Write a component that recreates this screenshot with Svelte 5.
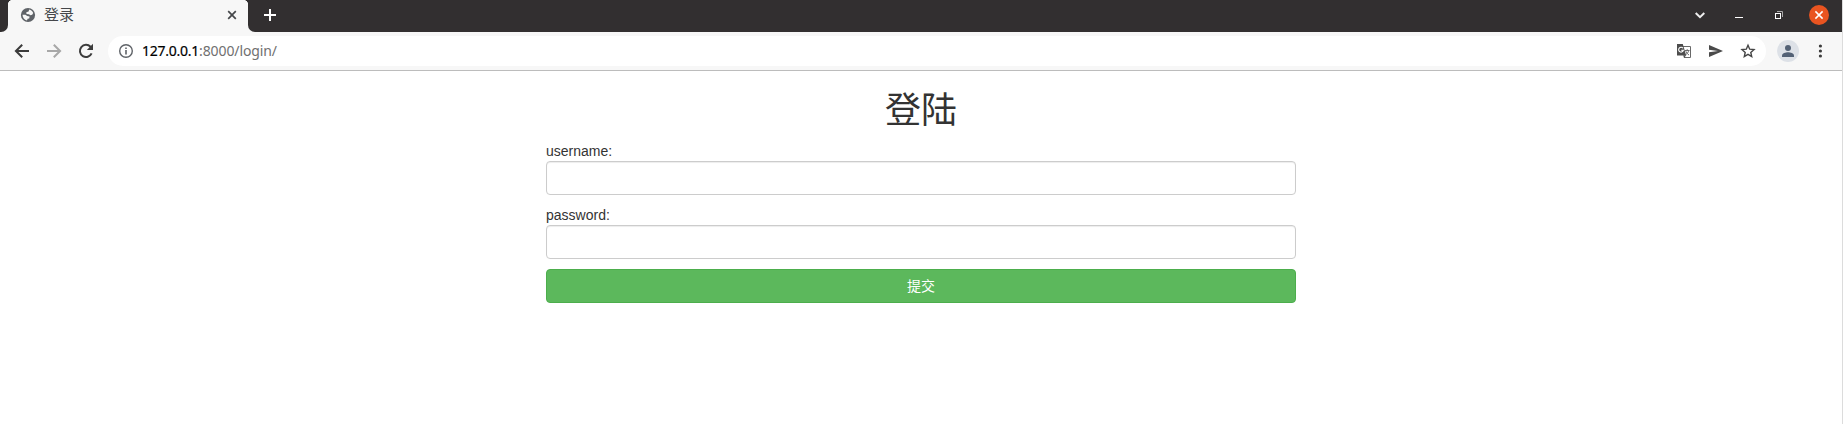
<script>
  let username = $state('');
  let password = $state('');
</script>

<div class="window">
  <header class="strip">
    <div class="edge"></div>
    <div class="tab">
      <svg class="globe" width="16" height="16" viewBox="0 0 16 16">
        <circle cx="8" cy="8" r="7.1" fill="#5f6368" />
        <path d="M9.2 2.5 C11 2.9 12.6 4.1 13.2 6 L12.2 7.8 L10.4 8.2 L9 7.2 L6.5 7 L6.3 5.2 L8.6 4.5 Z M2.5 7.8 L5.4 7.7 L7.2 8.9 L9.6 9.6 L9.2 11.4 L7.6 11.8 L7 13.6 C4.3 13 2.6 10.8 2.5 7.8 Z" fill="#f7f7f7" />
      </svg>
      <span class="title">登录</span>
      <svg class="shut" width="16" height="16" viewBox="0 0 16 16"><path d="M4.2 4.2 L11.8 11.8 M11.8 4.2 L4.2 11.8" stroke="#45474a" stroke-width="1.7" /></svg>
    </div>
    <div class="rest">
      <svg class="plus" width="16" height="16" viewBox="0 0 16 16"><path d="M8 2 V14 M2 8 H14" stroke="#fff" stroke-width="2" /></svg>
      <div class="controls">
        <svg width="20" height="20" viewBox="0 0 20 20"><path d="M6.7 8 L11 12.2 L15.3 8" fill="none" stroke="#eee" stroke-width="2" /></svg>
        <svg width="20" height="20" viewBox="0 0 20 20"><path d="M6 12.5 H14" stroke="#fff" /></svg>
        <svg width="20" height="20" viewBox="0 0 20 20"><path d="M8 6.5 H13.5 V12" fill="none" stroke="#aaa" /><rect x="6.5" y="8.5" width="5" height="5" fill="none" stroke="#fff" /></svg>
        <svg width="20" height="20" viewBox="0 0 20 20"><circle cx="10" cy="10" r="10" fill="#e95420" /><path d="M6.4 6.4 L13.6 13.6 M13.6 6.4 L6.4 13.6" stroke="#fff" stroke-width="1.5" /></svg>
      </div>
    </div>
  </header>

  <nav class="toolbar">
    <div class="nav">
      <svg width="16" height="16" viewBox="0 0 16 16"><path d="M15 8 H2.4 M8.2 1.7 L1.9 8 L8.2 14.3" fill="none" stroke="#3c3c3c" stroke-width="2" /></svg>
      <svg width="16" height="16" viewBox="0 0 16 16"><path d="M1 8 H13.6 M7.8 1.7 L14.1 8 L7.8 14.3" fill="none" stroke="#a8a8a8" stroke-width="2" /></svg>
      <svg width="16" height="16" viewBox="0 0 16 16"><path d="M13.6 10.4 A6.1 6.1 0 1 1 12.5 3.8 L13.5 5" fill="none" stroke="#3c3c3c" stroke-width="2" /><path d="M15 0.8 V7 H8.8 Z" fill="#3c3c3c" /></svg>
    </div>
    <div class="address">
      <svg width="16" height="16" viewBox="0 0 16 16"><circle cx="8" cy="8" r="6.3" fill="none" stroke="#5f6368" stroke-width="1.4" /><path d="M8 7.1 V11.4 M8 4.4 V6" stroke="#5f6368" stroke-width="1.6" /></svg>
      <div class="url"><span class="host">127.0.0.1</span><span class="path">:8000/login/</span></div>
      <div class="actions">
        <svg width="16" height="16" viewBox="0 0 16 16">
          <path d="M7 3.5 H14.5 V14.5 H8" fill="none" stroke="#696969" />
          <path d="M1 1 H6.8 L10.2 12.6 H1 Z" fill="#4d4d4d" />
          <path d="M10.2 12.3 L8 15 L7.2 12.3 Z" fill="#4d4d4d" />
          <path d="M7 5.3 A2.4 2.4 0 1 0 7.4 7.2 H5.2" fill="none" stroke="#fff" stroke-width="1.1" />
          <path d="M9 7.5 H13.5 M11.2 6.2 V7.5 M12.7 7.6 C12.2 9.4 11.4 10.3 10.2 11.4 M9.8 8.2 C10.5 9.8 11.8 11.3 13 12.1" fill="none" stroke="#696969" />
        </svg>
        <svg width="16" height="16" viewBox="0 0 16 16"><path d="M1 2 L15 8 L1 14 V9.3 L10 8 L1 6.7 Z" fill="#4a4a4a" /></svg>
        <svg width="16" height="16" viewBox="0 0 16 16"><path d="M8 2.3 L9.7 6.2 L14 6.6 L10.8 9.4 L11.7 13.6 L8 11.4 L4.3 13.6 L5.2 9.4 L2 6.6 L6.3 6.2 Z" fill="none" stroke="#454545" stroke-width="1.4" /></svg>
      </div>
    </div>
    <svg class="avatar" width="22" height="22" viewBox="0 0 22 22"><circle cx="11" cy="11" r="11" fill="#dde1e7" /><circle cx="11" cy="8" r="3" fill="#536175" /><path d="M5 17 V15.5 C5 13.3 8.7 12.3 11 12.3 S17 13.3 17 15.5 V17 Z" fill="#536175" /></svg>
    <svg class="dots" width="4" height="16" viewBox="0 0 4 16"><g fill="#3c3c3c"><circle cx="2.4" cy="3" r="1.6" /><circle cx="2.4" cy="8" r="1.6" /><circle cx="2.4" cy="13" r="1.6" /></g></svg>
  </nav>

  <main>
    <form onsubmit={(e) => e.preventDefault()}>
      <h1>登陆</h1>
      <label for="username">username:</label>
      <input id="username" type="text" bind:value={username} />
      <label for="password">password:</label>
      <input id="password" type="password" bind:value={password} />
      <button type="submit">提交</button>
    </form>
  </main>
</div>

<style>
  :global(body) { background: #fff; }
  * { box-sizing: border-box; }
  svg { display: block; flex: none; }
  .window {
    width: 1843px;
    height: 424px;
    border-right: 1px solid #dcdcdc;
    font-family: "Liberation Sans", "Noto Sans CJK SC", sans-serif;
    color: #333;
  }
  .strip { display: flex; height: 32px; background: #f7f7f7; }
  .edge { width: 8px; background: #322f30; border-bottom-right-radius: 7px; }
  .tab {
    width: 240px;
    display: flex;
    align-items: center;
    padding: 0 5px 2px 12px;
    background:
      radial-gradient(circle at 5px 5px, transparent 5px, #322f30 5.5px) 0 0 / 5px 5px no-repeat,
      radial-gradient(circle at 0 5px, transparent 5px, #322f30 5.5px) 100% 0 / 5px 5px no-repeat,
      #f7f7f7;
  }
  .title { margin-left: 8px; padding-bottom: 2px; font: 15px/28px "Noto Sans CJK SC", sans-serif; color: #45474a; }
  .shut { margin-left: auto; margin-right: 3px; }
  .rest {
    flex: 1;
    display: flex;
    justify-content: space-between;
    align-items: center;
    padding: 0 13px 2px 14px;
    background: #322f30;
    border-bottom-left-radius: 7px;
  }
  .controls { display: flex; gap: 20px; }
  .toolbar {
    display: flex;
    align-items: center;
    height: 39px;
    padding: 0 20px 0 14px;
    background: #f7f7f7;
    border-bottom: 1px solid #bcbcbc;
  }
  .nav { display: flex; gap: 16px; width: 94px; }
  .address {
    flex: 1;
    display: flex;
    align-items: center;
    height: 30px;
    padding: 0 10px;
    border-radius: 15px;
    background: #fff;
  }
  .url { display: flex; margin-left: 8px; font: 14px/30px "Noto Sans", sans-serif; }
  .host { width: 57px; letter-spacing: -0.25px; color: #000; -webkit-text-stroke: 0.2px #000; }
  .path { color: #707070; letter-spacing: -0.1px; }
  .actions { display: flex; gap: 16px; margin-left: auto; }
  .avatar { margin-left: 11px; }
  .dots { margin-left: 19px; }
  form { width: 750px; margin: 0 auto; padding-top: 20px; }
  h1 { height: 40px; margin: 0 0 10px; text-align: center; font: 400 36px/32px "Noto Sans CJK SC", sans-serif; }
  label { display: block; font-size: 14px; line-height: 20px; }
  input {
    display: block;
    width: 100%;
    height: 34px;
    margin: 0 0 10px;
    padding: 6px 12px;
    border: 1px solid #ccc;
    border-radius: 4px;
    outline: none;
    background: #fff;
    box-shadow: inset 0 1px 1px rgba(0, 0, 0, 0.075);
    font-size: 14px;
  }
  button {
    display: block;
    width: 100%;
    height: 34px;
    padding: 0 0 2px;
    border: 1px solid #4cae4c;
    border-radius: 4px;
    background: #5cb85c;
    color: #fff;
    font: 14px/20px "Noto Sans CJK SC", sans-serif;
  }
</style>
